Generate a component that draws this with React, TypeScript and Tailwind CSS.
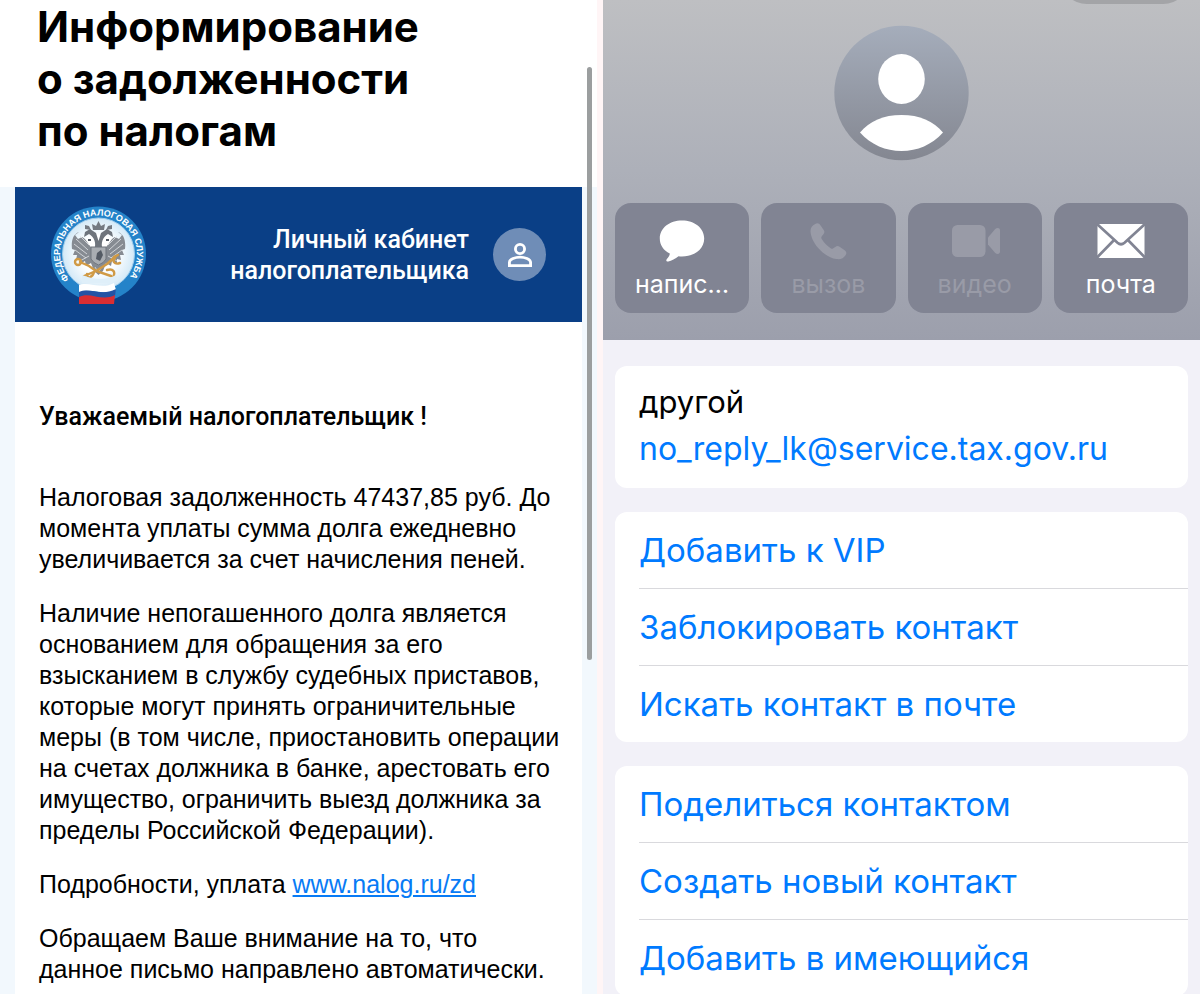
import type { ReactNode } from "react";

function TaxEmblem() {
  return (
    <svg viewBox="0 0 120 120" className="size-[120px] shrink-0" role="img" aria-label="Федеральная налоговая служба">
      <defs>
        <path id="emblem-arc" d="M29.200 84 A38.500 38.500 0 1 1 87.800 84" />
        <radialGradient id="emblem-disc">
          <stop offset="0.5" stopColor="#ffffff" />
          <stop offset="1" stopColor="#d3e9f7" />
        </radialGradient>
      </defs>
      <circle cx="58.500" cy="59" r="47.500" fill="#2483c9" />
      <circle cx="58.500" cy="59" r="36" fill="url(#emblem-disc)" stroke="#9fcdec" strokeWidth="1" />
      <text fill="#fff" fontSize="9" fontWeight="700" fontFamily="Liberation Sans, sans-serif">
        <textPath href="#emblem-arc">ФЕДЕРАЛЬНАЯ НАЛОГОВАЯ СЛУЖБА</textPath>
      </text>
      <g fill="#868b92">
        <path d="M54 54 C48 51 47 44 42 42 L38 44 L35 40 L39 37 C33 39 31 46 32 54 L35 55 L33 60 L37 60 L36 65 L40 64 L40 69 L45 66 L46 71 L51 68 L54 76 L58.500 80 L63 76 L66 68 L71 71 L72 66 L77 69 L77 64 L81 65 L80 60 L84 60 L82 55 L85 54 C86 46 84 39 78 37 L82 40 L79 44 L75 42 C70 44 69 51 63 54Z" />
        <path d="M54 55 C57 48 54 42 49 39 L44 42 L45 37 L50 34 L56 38 L58.500 46 L61 38 L67 34 L72 37 L73 42 L68 39 C63 42 60 48 63 55Z" fill="#6e747c" />
        <path d="M53 35 L52 29 L56 31 L58.500 26 L61 31 L65 29 L64 35Z M45 34 L45 30 L49 31 L51 35Z M72 34 L72 30 L68 31 L66 35Z" fill="#747a82" />
      </g>
      <g stroke="#e3e6e8" strokeWidth="0.8" fill="none">
        <path d="M36 44 L48 55 M34 49 L47 59 M35 55 L46 63 M40 41 L49 50 M81 44 L69 55 M83 49 L70 59 M82 55 L71 63 M77 41 L68 50" />
        <path d="M40 66 L49 61 M77 66 L68 61 M55 72 L58 77 L62 72" />
      </g>
      <path d="M51 52 H66 V64 Q64 68 58.500 70 Q53 68 51 64Z" fill="#a9adb2" stroke="#6f757d" />
      <path d="M56 64 L57 58 L61 55 L63 60 L60 66Z M48 44 h3 v2 h-3Z M66 44 h3 v2 h-3Z" fill="#535a64" />
      <g fill="none" stroke="#d09a45" strokeWidth="2.400" strokeLinecap="round">
        <path d="M40 67 L49 71 L56 76 L71 81 M44 81 L56 76 L67 69 L76 61" />
        <circle cx="38" cy="67" r="3" />
        <path d="M75 63 C72 66 74 70 80 68 M74 62 L78 60 M47 79 C47 85 53 82 54 77 M67 75 C73 73 76 77 73 82" />
      </g>
      <path d="M42 80 Q62 88 76 80 L78 84 L72 88 L42 88Z" fill="#dfeff9" />
      <path d="M39 90 C48 86 62 95 74 88 L76 95 C62 101 50 92 39 98Z" fill="#fff" />
      <path d="M39 97 C50 92 61 102 76 94 L75 101 C62 107 50 97 39 103Z" fill="#2453a4" />
      <path d="M39 102 C50 96 61 107 75 100 L74 109 H39Z" fill="#d92e32" />
    </svg>
  );
}

function ProfileIcon() {
  return (
    <svg viewBox="0 0 24 24" className="size-9" fill="none" stroke="#fff" strokeWidth="1.900" aria-hidden="true">
      <circle cx="12" cy="8" r="3.050" />
      <path d="M4.950 19.050 V16.900 C4.950 14.700 9 13.400 12 13.400 C15 13.400 19.050 14.700 19.050 16.900 V19.050Z" />
    </svg>
  );
}

function Avatar() {
  return (
    <svg viewBox="0 0 136 136" className="size-[136px]" role="img" aria-label="Контакт">
      <defs>
        <linearGradient id="avatar-fill" x1="0" x2="0" y1="0" y2="1">
          <stop stopColor="#a5adbb" />
          <stop offset="1" stopColor="#848791" />
        </linearGradient>
      </defs>
      <circle cx="67.500" cy="68" r="67.200" fill="url(#avatar-fill)" />
      <ellipse cx="67.500" cy="54" rx="23.300" ry="25" fill="#fff" />
      <path d="M26 107.500 C35.500 96 49.500 90 67.500 90 C85.500 90 99.500 96 109 107.500 C97.500 120 83.500 126 67.500 126 C51.500 126 37.500 120 26 107.500Z" fill="#fff" />
    </svg>
  );
}

function MessageIcon() {
  return (
    <svg viewBox="0 0 50 44" className="h-11 w-[50px]" fill="currentColor" aria-hidden="true">
      <path d="M25 1.500 C37.500 1.500 47.200 9 47.200 19.500 C47.200 30 37.500 37.500 25 37.500 C23.700 37.500 22.600 37.500 21.500 37.300 C18.500 39.600 14.500 41.900 11.300 42.500 C9.300 42.800 8.700 41.200 9.900 39.900 C11.500 38.200 12.700 36.700 12.800 34.600 C6.500 31.300 2.800 26.200 2.800 19.500 C2.800 9 12.500 1.500 25 1.500Z" />
    </svg>
  );
}

function PhoneIcon() {
  return (
    <svg viewBox="0 0 50 44" className="h-11 w-[50px]" fill="currentColor" aria-hidden="true">
      <path d="M12.200 4.900 C14.500 3.700 16.300 4.500 17.600 6.400 L20.700 11 C21.800 12.700 21.500 14 20.200 15.600 L18.800 17.300 C18 18.400 18.200 19.100 18.900 20.300 C21.300 24.200 24 26.900 27.600 29.200 C28.700 29.900 29.400 30.100 30.300 29.300 L32.300 27.900 C33.800 26.800 35.100 26.700 36.600 27.700 L41.300 30.900 C43.400 32.300 43.900 34 42.700 35.900 C40.600 39.200 37.600 40.800 33.400 40.100 C26.500 39 20.100 34.600 15.200 29 C10.400 23.500 7.600 17.200 7.500 12 C7.500 8.500 9.300 6.400 12.200 4.900Z" />
    </svg>
  );
}

function VideoIcon() {
  return (
    <svg viewBox="0 0 50 44" className="h-11 w-[50px]" fill="currentColor" aria-hidden="true">
      <rect x="2" y="6" width="33.500" height="32" rx="5.500" />
      <path d="M38 18.500 L45 10.200 C47 8.300 50 8.600 50 11.400 V32.600 C50 35.400 47 35.700 45 33.800 L38 25.500Z" />
    </svg>
  );
}

function MailIcon() {
  return (
    <svg viewBox="0 0 50 44" className="h-11 w-[50px]" aria-hidden="true">
      <rect x="1.500" y="5" width="47" height="34" rx="2.500" fill="#fff" />
      <path d="M1 5 L21.500 23.700 C23.800 25.700 26.200 25.700 28.500 23.700 L49 5 M1 38.500 L17.600 21.500 M49 38.500 L32.400 21.500" fill="none" stroke="#818493" strokeWidth="2.700" />
    </svg>
  );
}

function ContactAction({ icon, label, disabled = false }: { icon: ReactNode; label: string; disabled?: boolean }) {
  return (
    <button
      type="button"
      disabled={disabled}
      className="flex h-[110px] min-w-0 flex-col items-center rounded-2xl bg-[#818493] pt-4 text-white disabled:text-[#999ba7]"
    >
      {icon}
      <span className="mt-[3px] text-[25px] leading-9">{label}</span>
    </button>
  );
}

function ActionGroup({ items }: { items: string[] }) {
  return (
    <ul className="overflow-hidden rounded-xl bg-white pl-6">
      {items.map((item) => (
        <li key={item} className="border-t border-[#d9d9dd] first:border-t-0">
          <button type="button" className="flex h-[76px] w-full items-center text-left text-[33px] leading-10 whitespace-nowrap text-[#007aff]">
            {item}
          </button>
        </li>
      ))}
    </ul>
  );
}

function Letter() {
  return (
    <section className="relative flex flex-col bg-white text-black">
      <h1 className="h-[187px] pt-px pl-[37px] font-['Inter',sans-serif] text-[42px] leading-[52px] font-bold">
        Информирование
        <br />о задолженности
        <br />
        по налогам
      </h1>
      <div className="flex grow flex-col bg-[#f2f8fd] px-[15px]">
        <header className="flex h-[135px] items-center bg-[#0a3f86] pr-9 pl-[25px] font-['Roboto',sans-serif]">
          <TaxEmblem />
          <p className="ml-auto text-right text-[25px] leading-[31px] font-medium text-white">
            Личный кабинет
            <br />
            налогоплательщика
          </p>
          <a href="#profile" aria-label="Профиль" className="ml-6 flex size-[53px] items-center justify-center rounded-full bg-[#6f8db7]">
            <ProfileIcon />
          </a>
        </header>
        <article className="flex grow flex-col gap-[23px] bg-white pr-5 pb-2 pl-6 font-['Liberation_Sans',sans-serif] text-[25px] leading-[31px]">
          <h2 className="pt-[79px] pb-[27px] font-['Roboto',sans-serif] font-medium">Уважаемый налогоплательщик !</h2>
          <p>
            Налоговая задолженность 47437,85 руб. До
            <br />
            момента уплаты сумма долга ежедневно
            <br />
            увеличивается за счет начисления пеней.
          </p>
          <p>
            Наличие непогашенного долга является
            <br />
            основанием для обращения за его
            <br />
            взысканием в службу судебных приставов,
            <br />
            которые могут принять ограничительные
            <br />
            меры (в том числе, приостановить операции
            <br />
            на счетах должника в банке, арестовать его
            <br />
            имущество, ограничить выезд должника за
            <br />
            пределы Российской Федерации).
          </p>
          <p>
            Подробности, уплата{" "}
            <a href="#details" className="text-[#087bf5] underline decoration-2 underline-offset-2">
              www.nalog.ru/zd
            </a>
          </p>
          <p>
            Обращаем Ваше внимание на то, что
            <br />
            данное письмо направлено автоматически.
          </p>
        </article>
      </div>
      <div className="absolute top-[67px] right-[5px] h-[593px] w-[5px] rounded-full bg-[#9b9e9f]" />
    </section>
  );
}

function ContactCard() {
  return (
    <section className="min-w-0 bg-[#f2f1f8] font-['Inter',sans-serif]">
      <header className="relative flex h-[340px] flex-col overflow-hidden bg-linear-to-b from-[#bebfc2] via-[#adb0b9] to-[#9c9fac] px-3 pt-[25px]">
        <div className="absolute -top-[50px] right-[10px] h-[54px] w-[130px] rounded-full bg-[#a3a4a7]" />
        <div className="flex justify-center">
          <Avatar />
        </div>
        <div className="mt-[42px] grid grid-cols-4 gap-3">
          <ContactAction icon={<MessageIcon />} label="напис…" />
          <ContactAction icon={<PhoneIcon />} label="вызов" disabled />
          <ContactAction icon={<VideoIcon />} label="видео" disabled />
          <ContactAction icon={<MailIcon />} label="почта" />
        </div>
      </header>
      <div className="flex flex-col gap-6 px-3 pt-[26px]">
        <div className="rounded-xl bg-white px-6 pt-3 pb-4">
          <p className="text-[31px] leading-[47px] text-black">другой</p>
          <a href="mailto:no_reply_lk@service.tax.gov.ru" className="block text-[32px] leading-[47px] text-[#007aff]">
            no_reply_lk@service.tax.gov.ru
          </a>
        </div>
        <ActionGroup items={["Добавить к VIP", "Заблокировать контакт", "Искать контакт в почте"]} />
        <ActionGroup items={["Поделиться контактом", "Создать новый контакт", "Добавить в имеющийся"]} />
      </div>
    </section>
  );
}

export default function App() {
  return (
    <main className="grid grid-cols-2 gap-[6px] bg-[#fff5f6]">
      <Letter />
      <ContactCard />
    </main>
  );
}
